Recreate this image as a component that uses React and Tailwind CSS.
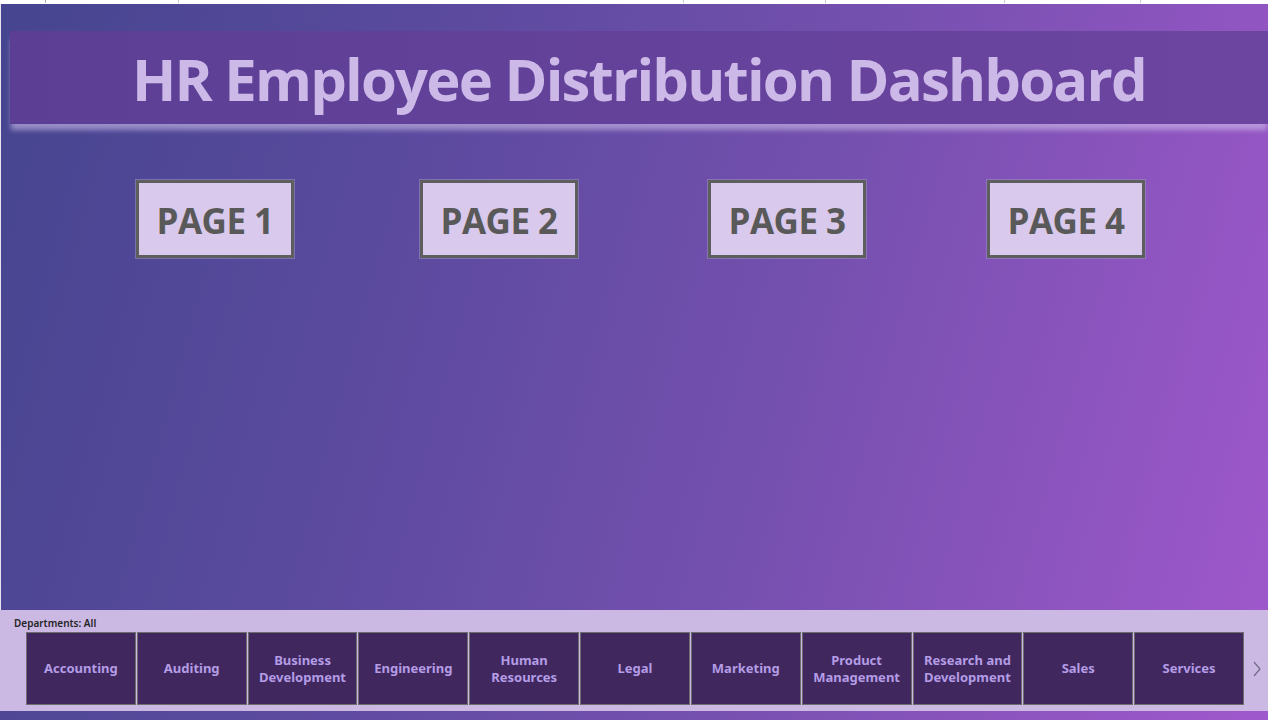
import React from "react";

const depts = [
  ["Accounting"],
  ["Auditing"],
  ["Business", "Development"],
  ["Engineering"],
  ["Human", "Resources"],
  ["Legal"],
  ["Marketing"],
  ["Product", "Management"],
  ["Research and", "Development"],
  ["Sales"],
  ["Services"],
];

function PageButton({ label, className }) {
  return (
    <div
      className={
        "h-[78px] w-[158px] border-[3px] border-[#5e5e5e] bg-[#d9c9ec] flex items-center justify-center shadow-[0_0_0_1px_rgba(150,140,190,0.6)] " +
        className
      }
    >
      <span className="text-[35px] font-bold text-[#595959] leading-none tracking-[-0.5px] mt-[2px]" style={{ fontFamily: '"Open Sans", sans-serif' }}>
        {label}
      </span>
    </div>
  );
}

export default function App() {
  return (
    <div className="w-[1268px] h-[720px] overflow-hidden flex flex-col bg-[linear-gradient(105deg,#46458f_0%,#5a4a9e_30%,#7450ae_60%,#a058cc_100%)]">
      <div className="h-[4px] bg-white shrink-0 relative">
        <div className="absolute left-[45px] top-0 w-px h-[3px] bg-[#b0b0b0]" />
        <div className="absolute left-[178px] top-0 w-px h-[3px] bg-[#c8c8c8]" />
        <div className="absolute left-[683px] top-0 w-px h-[3px] bg-[#c8c8c8]" />
        <div className="absolute left-[825px] top-0 w-px h-[3px] bg-[#c8c8c8]" />
        <div className="absolute left-[1004px] top-0 w-px h-[3px] bg-[#c8c8c8]" />
        <div className="absolute left-[1140px] top-0 w-px h-[3px] bg-[#c8c8c8]" />
      </div>
      <div className="flex-1 flex flex-col border-l border-[#e8e4f2]">
        <div className="mt-[27px] ml-[9px] h-[93px] flex items-center justify-center bg-[linear-gradient(90deg,#5c3f95,#6c45a0)] shadow-[0_7px_5px_-1px_rgba(215,200,240,0.55)]">
          <h1
            className="text-[58px] font-bold text-[#cdb9e8] leading-none tracking-[-1.8px] mt-[2px]"
            style={{ fontFamily: '"Open Sans", sans-serif' }}
          >
            HR Employee Distribution Dashboard
          </h1>
        </div>
        <div className="mt-[56px] flex">
          <PageButton label="PAGE 1" className="ml-[135px]" />
          <PageButton label="PAGE 2" className="ml-[126px]" />
          <PageButton label="PAGE 3" className="ml-[130px]" />
          <PageButton label="PAGE 4" className="ml-[121px]" />
        </div>
      </div>
      <div className="h-[101px] mb-[9px] shrink-0 bg-[#cbb8e3] flex flex-col pl-[14px] pr-[2px]">
        <div
          className="mt-[7px] h-[12px] text-[10px] font-semibold text-[#252525] leading-[12px]"
          style={{ fontFamily: '"Noto Sans", sans-serif' }}
        >
          Departments: All
        </div>
        <div className="mt-[3px] flex items-center">
          <div className="ml-[12px] w-[1218px] flex gap-px">
            {depts.map((d, i) => (
              <div
                key={i}
                className="flex-1 h-[73px] bg-[#40285f] border border-[#6e6e6e] flex flex-col items-center justify-center text-[13px] font-bold text-[#b49ce6] leading-[17px] text-center"
                style={{ fontFamily: '"Noto Sans", sans-serif' }}
              >
                {d.map((l, j) => (
                  <span key={j}>{l}</span>
                ))}
              </div>
            ))}
          </div>
          <svg className="ml-[8px]" width="10" height="18" viewBox="0 0 10 18">
            <path d="M2 2 L8 9 L2 16" fill="none" stroke="#6e6a86" strokeWidth="1.2" />
          </svg>
        </div>
      </div>
    </div>
  );
}
